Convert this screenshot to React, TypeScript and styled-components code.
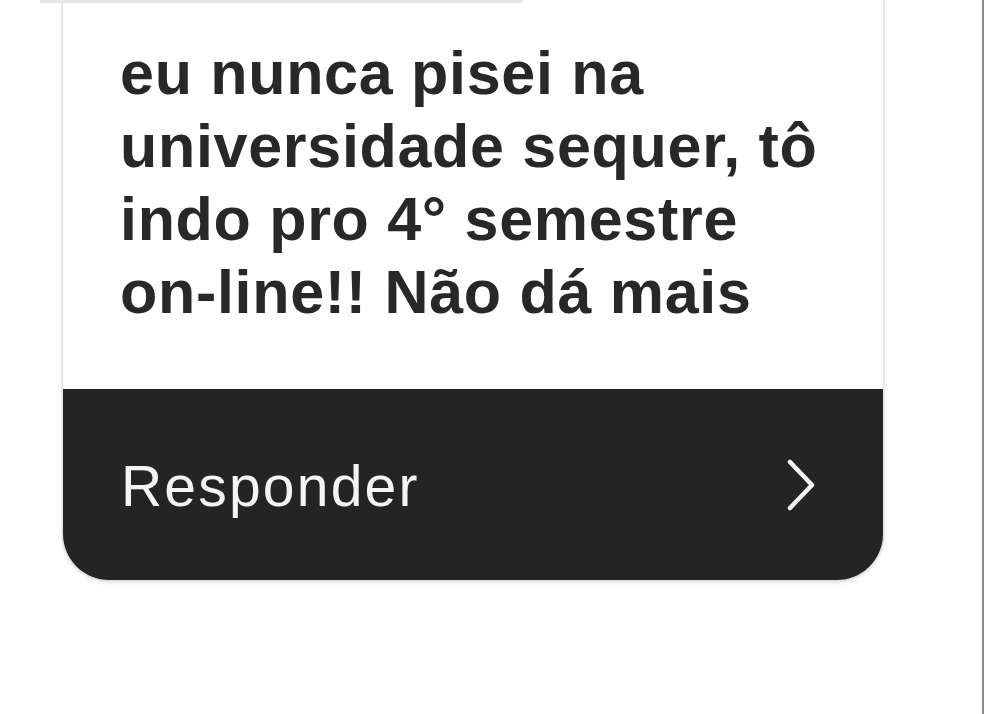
import styled, { createGlobalStyle } from "styled-components";

const GlobalStyle = createGlobalStyle`
  html, body {
    margin: 0;
    padding: 0;
    background: #ffffff;
  }
  #root {
    height: 714px;
  }
`;

const Screen = styled.div`
  position: relative;
  width: 984px;
  height: 714px;
  overflow: hidden;
  background: #ffffff;
  border-right: 2px solid #8c8c8c;
  box-sizing: border-box;
  display: flex;
  flex-direction: column;
`;

// edge of the previous sticker, peeking in over the card
const TopEdge = styled.div`
  position: relative;
  z-index: 1;
  height: 3px;
  width: 483px;
  margin-left: 40px;
  background: #e6e6e6;
  flex-shrink: 0;
`;

const Card = styled.div`
  width: 820px;
  margin: -63px 0 0 63px;
  border-radius: 46px;
  overflow: hidden;
  box-shadow: 0 0 0 1.5px #e2e2e2, 0 2px 5px rgba(0, 0, 0, 0.14);
  display: flex;
  flex-direction: column;
  flex-shrink: 0;
`;

const Question = styled.div`
  background: #ffffff;
  padding: 97px 40px 60px 57px;
`;

const QuestionText = styled.p`
  margin: 0;
  font-family: "Liberation Sans", Arial, sans-serif;
  font-weight: 700;
  font-size: 61px;
  line-height: 73px;
  color: #282828;
  letter-spacing: 0.7px;
`;

const ReplyBar = styled.button`
  height: 191px;
  background: #242424;
  border: none;
  padding: 0 66px 0 58px;
  display: flex;
  align-items: center;
  justify-content: space-between;
  cursor: pointer;
`;

const ReplyLabel = styled.span`
  font-family: "Liberation Sans", Arial, sans-serif;
  font-weight: 400;
  font-size: 57px;
  letter-spacing: 2.2px;
  color: #f4f4f4;
  margin-top: 3px;
`;

function Chevron() {
  return (
    <svg width="32" height="54" viewBox="0 0 32 54" fill="none">
      <path
        d="M5 4 L27 27 L5 50"
        stroke="#f4f4f4"
        strokeWidth="4.5"
        strokeLinecap="round"
        strokeLinejoin="round"
      />
    </svg>
  );
}

export default function App() {
  return (
    <>
      <GlobalStyle />
      <Screen>
        <TopEdge />
        <Card>
          <Question>
            <QuestionText>
              eu nunca pisei na
              <br />
              universidade sequer, tô
              <br />
              indo pro 4° semestre
              <br />
              on-line!! Não dá mais
            </QuestionText>
          </Question>
          <ReplyBar>
            <ReplyLabel>Responder</ReplyLabel>
            <Chevron />
          </ReplyBar>
        </Card>
      </Screen>
    </>
  );
}
